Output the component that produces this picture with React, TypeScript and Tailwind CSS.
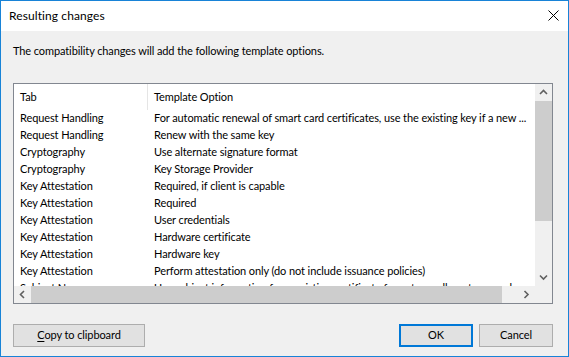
const rows: [string, string][] = [
  ["Request Handling", "For automatic renewal of smart card certificates, use the existing key if a new ..."],
  ["Request Handling", "Renew with the same key"],
  ["Cryptography", "Use alternate signature format"],
  ["Cryptography", "Key Storage Provider"],
  ["Key Attestation", "Required, if client is capable"],
  ["Key Attestation", "Required"],
  ["Key Attestation", "User credentials"],
  ["Key Attestation", "Hardware certificate"],
  ["Key Attestation", "Hardware key"],
  ["Key Attestation", "Perform attestation only (do not include issuance policies)"],
  ["Subject Name", "Use subject information from existing certificate for autoenrollment renewal requests"],
];

function Chevron({ dir }: { dir: "up" | "down" | "left" | "right" }) {
  const pts = {
    up: "1,5 4.5,1.5 8,5",
    down: "1,1.5 4.5,5 8,1.5",
    left: "5,1 1.5,4.5 5,8",
    right: "1.5,1 5,4.5 1.5,8",
  }[dir];
  const vert = dir === "up" || dir === "down";
  return (
    <svg width={vert ? 9 : 7} height={vert ? 7 : 9} viewBox={vert ? "0 0 9 7" : "0 0 7 9"}>
      <polyline points={pts} fill="none" stroke="#606060" strokeWidth="1.6" />
    </svg>
  );
}

export default function App() {
  return (
    <div className="flex h-[357px] w-[569px] flex-col border border-[#1883d7] bg-[#f0f0f0] font-['Lato',sans-serif] text-[11px] tracking-[-0.1px] text-black">
      {/* title bar */}
      <div className="flex h-[30px] shrink-0 items-center justify-between bg-white pl-2 pr-[9px]">
        <span className="text-[12px] tracking-[0.1px]">Resulting changes</span>
        <svg width="11" height="11" viewBox="0 0 11 11" className="-mt-px">
          <path d="M0.5 0.5 L10.5 10.5 M10.5 0.5 L0.5 10.5" stroke="#000" strokeWidth="1" />
        </svg>
      </div>

      {/* body */}
      <div className="flex flex-1 flex-col pl-3 pr-[15px] pt-3">
        <p className="h-4 leading-4">The compatibility changes will add the following template options.</p>

        {/* list view */}
        <div className="mt-6 grid h-[221px] grid-cols-[1fr_17px] grid-rows-[1fr_17px] border border-[#828790] bg-white">
          <div className="overflow-hidden">
            <div className="flex h-[26px] items-center">
              <div className="w-[133px] shrink-0 pl-[6px]">Tab</div>
              <div className="h-full w-px bg-[#e5e5e5]" />
              <div className="pl-[6px]">Template Option</div>
            </div>
            {rows.map(([tab, opt], i) => (
              <div key={i} className="flex h-[17px] items-center whitespace-nowrap">
                <div className="w-[134px] shrink-0 pl-[6px]">{tab}</div>
                <div className="pl-[6px]">{opt}</div>
              </div>
            ))}
          </div>

          {/* vertical scrollbar */}
          <div className="flex flex-col bg-[#f0f0f0]">
            <div className="flex h-[17px] items-center justify-center">
              <Chevron dir="up" />
            </div>
            <div className="h-[120px] bg-[#cdcdcd]" />
            <div className="flex-1" />
            <div className="flex h-[17px] items-center justify-center">
              <Chevron dir="down" />
            </div>
          </div>

          {/* horizontal scrollbar */}
          <div className="flex bg-[#f0f0f0]">
            <div className="flex w-[17px] items-center justify-center">
              <Chevron dir="left" />
            </div>
            <div className="w-[471px] bg-[#cdcdcd]" />
            <div className="flex-1" />
            <div className="flex w-[17px] items-center justify-center">
              <Chevron dir="right" />
            </div>
          </div>
          <div className="bg-[#f0f0f0]" />
        </div>

        {/* buttons */}
        <div className="mt-5 flex h-[23px] items-stretch">
          <button className="w-[132px] border border-[#adadad] bg-[#e1e1e1]">
            <u className="underline-offset-2">C</u>opy to clipboard
          </button>
          <div className="flex-1" />
          <button className="w-[74px] border-2 border-[#0078d7] bg-[#e1e1e1]">OK</button>
          <button className="ml-[6px] w-[74px] border border-[#adadad] bg-[#e1e1e1]">Cancel</button>
        </div>
      </div>
    </div>
  );
}
